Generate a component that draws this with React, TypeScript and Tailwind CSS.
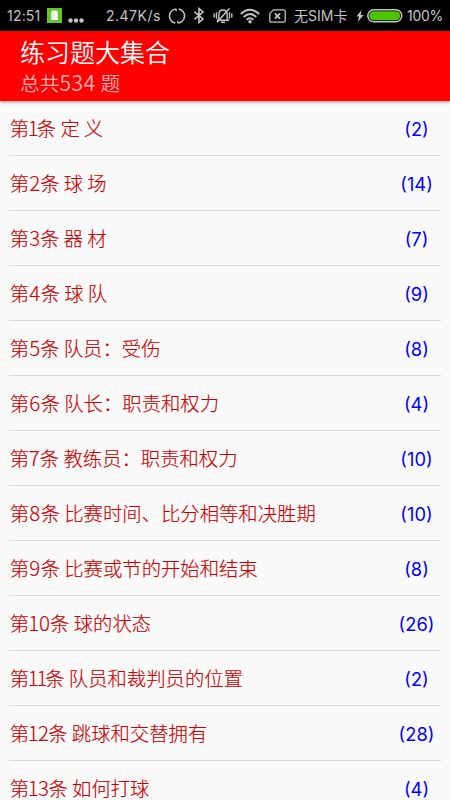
import React from "react";

const chapters = [
  { no: "1", tight: "-ml-[1.5px] tracking-[-1.8px]", title: "定 义", count: "2" },
  { no: "2", tight: "", title: "球 场", count: "14" },
  { no: "3", tight: "", title: "器 材", count: "7" },
  { no: "4", tight: "tracking-[0.5px]", title: "球 队", count: "9" },
  { no: "5", tight: "", title: "队员：受伤", count: "8" },
  { no: "6", tight: "tracking-[0.5px]", title: "队长：职责和权力", count: "4" },
  { no: "7", tight: "-ml-[0.3px]", title: "教练员：职责和权力", count: "10" },
  { no: "8", tight: "tracking-[0.5px]", title: "比赛时间、比分相等和决胜期", count: "10" },
  { no: "9", tight: "tracking-[0.5px]", title: "比赛或节的开始和结束", count: "8" },
  { no: "10", tight: "-ml-[1px]", title: "球的状态", count: "26" },
  { no: "11", tight: "-ml-[1.5px] tracking-[-2.2px]", title: "队员和裁判员的位置", count: "2" },
  { no: "12", tight: "-ml-[1.5px] tracking-[-0.7px]", title: "跳球和交替拥有", count: "28" },
  { no: "13", tight: "-ml-[1.5px] tracking-[-0.6px]", title: "如何打球", count: "4" },
];

function StatusBar() {
  return (
    <div className="flex h-[31px] shrink-0 items-center bg-black pl-[7px] font-[Inter,'Noto_Sans_CJK_SC',sans-serif] text-[14px] leading-[31px] text-[#c4c4c4]">
      <span className="w-[40px] tracking-[0.2px]">12:51</span>
      <svg className="h-[15px] w-[15px]" viewBox="0 0 15 15">
        <path d="M0 0h15v15H0z" fill="#66c42c" />
        <path d="M4.3 12V4.5Q4.3 2.5 6.3 2.5H8.5Q10.7 2.5 10.7 4.5V12Z" fill="#fff" />
        <path d="M6.3 4.7h1.5v5h-1.5z" fill="#d9efca" />
      </svg>
      <svg className="mt-[9px] ml-[6px] h-[5px] w-[16px]" viewBox="0 0 16 5" fill="#c4c4c4">
        <circle cx="2.5" cy="2.5" r="2.2" />
        <circle cx="8" cy="2.5" r="2.2" />
        <circle cx="13.5" cy="2.5" r="2.2" />
      </svg>
      <span className="ml-[22px] w-[62px] whitespace-nowrap tracking-[0.5px]">2.47K/s</span>
      <svg className="h-[18px] w-[18px]" viewBox="0 0 18 18" fill="none" stroke="#c4c4c4" strokeWidth="1.5">
        <path d="M7.4 16A7.1 7.1 0 0 1 8.2 1.9M10.6 2A7.1 7.1 0 0 1 9.8 16.1" />
        <path d="M8.2 1.9v2.4M9.8 16.1v-2.4" strokeWidth="1.2" />
      </svg>
      <svg className="ml-[7px] h-[17px] w-[12px]" viewBox="0 0 12 17" fill="none" stroke="#c4c4c4" strokeWidth="1.6">
        <path d="M1.5 4.6 10 12 6 15.4V1.6L10 5 1.5 12.4" />
      </svg>
      <svg className="ml-[8px] h-[18px] w-[20px]" viewBox="0 0 20 18" fill="none" stroke="#c4c4c4" strokeWidth="1.4">
        <path d="M5 13.2Q5.9 12 5.9 9V7.2Q6.1 3 10 3T14.1 7.2V9Q14.1 12 15 13.2ZM8 15.2h4M16.5 1.3 4 15.5M3.5 5.2v6.5M16.5 5.2v6.5M1.2 6.5v4M18.8 6.5v4" />
      </svg>
      <svg className="ml-[7px] h-[16px] w-[20px]" viewBox="0 0 20 16" fill="none" stroke="#c4c4c4" strokeWidth="1.9">
        <path d="M.8 6Q10-2.3 19.2 6M3.7 9Q10 3.2 16.3 9M6.6 11.8Q10 8.8 13.4 11.8" />
        <circle cx="10" cy="13.7" r="1.7" fill="#c4c4c4" stroke="none" />
      </svg>
      <svg className="ml-[9px] h-[14px] w-[17px]" viewBox="0 0 17 14" fill="none" stroke="#c4c4c4" strokeWidth="1.3">
        <path d="M4.5.8H14.7Q16.2.8 16.2 2.3V11.7Q16.2 13.2 14.7 13.2H2.3Q.8 13.2.8 11.7V4.4Z" />
        <path d="m5.9 4.4 5.2 5.2m0-5.2L5.9 9.6" strokeWidth="1.8" />
      </svg>
      <span className="ml-[8px] w-[56px] whitespace-nowrap">无SIM卡</span>
      <svg className="ml-[6px] h-[14px] w-[8px]" viewBox="0 0 8 14" fill="#c4c4c4">
        <path d="M5.6 1 .4 7.6h2.7L1.7 13 7.6 5.9H4.7Z" />
      </svg>
      <svg className="ml-[3px] h-[14px] w-[36px]" viewBox="0 0 36 14">
        <rect x=".8" y=".8" width="34" height="12" rx="6" fill="#000" stroke="#c4c4c4" strokeWidth="1.5" />
        <rect x="2.3" y="2.3" width="31" height="9" rx="4.5" fill="#4cc404" />
      </svg>
      <span className="ml-[4px] whitespace-nowrap tracking-[-0.3px]">100%</span>
    </div>
  );
}

export default function App() {
  return (
    <div className="flex h-[800px] w-[450px] flex-col overflow-hidden bg-[#fafafa] font-['Noto_Sans_CJK_SC',sans-serif]">
      <StatusBar />
      <header className="z-10 flex h-[70px] shrink-0 flex-col bg-[#ff0000] pt-[3px] pl-[20px] shadow-[0_1px_3px_rgba(0,0,0,0.45)]">
        <h1 className="text-[25px] leading-[35px] font-[350] text-white">练习题大集合</h1>
        <p className="pt-px text-[19.7px] leading-[26px] font-[350] text-[#ffb3b3]">
          总共<span className="text-[21px] leading-none tracking-[0.7px]">534</span> 题
        </p>
      </header>
      <ul className="flex flex-col pr-[9px] pl-[9px]">
        {chapters.map((c) => (
          <li key={c.no} className="flex h-[55px] shrink-0 items-center justify-between border-b border-[#dadada]">
            <span className="pl-[0.8px] whitespace-nowrap text-[19.35px] leading-[28px] font-light text-[#cc0000] [-webkit-text-stroke:0.15px_#cc0000]">
              第<span className={`text-[20.5px] leading-none ${c.tight}`}>{c.no}</span>条 {c.title}
            </span>
            <span className="w-[49px] pt-px text-center font-[Inter,sans-serif] text-[18.3px] leading-[24px] font-normal text-[#0000ff]">
              ({c.count})
            </span>
          </li>
        ))}
      </ul>
    </div>
  );
}
